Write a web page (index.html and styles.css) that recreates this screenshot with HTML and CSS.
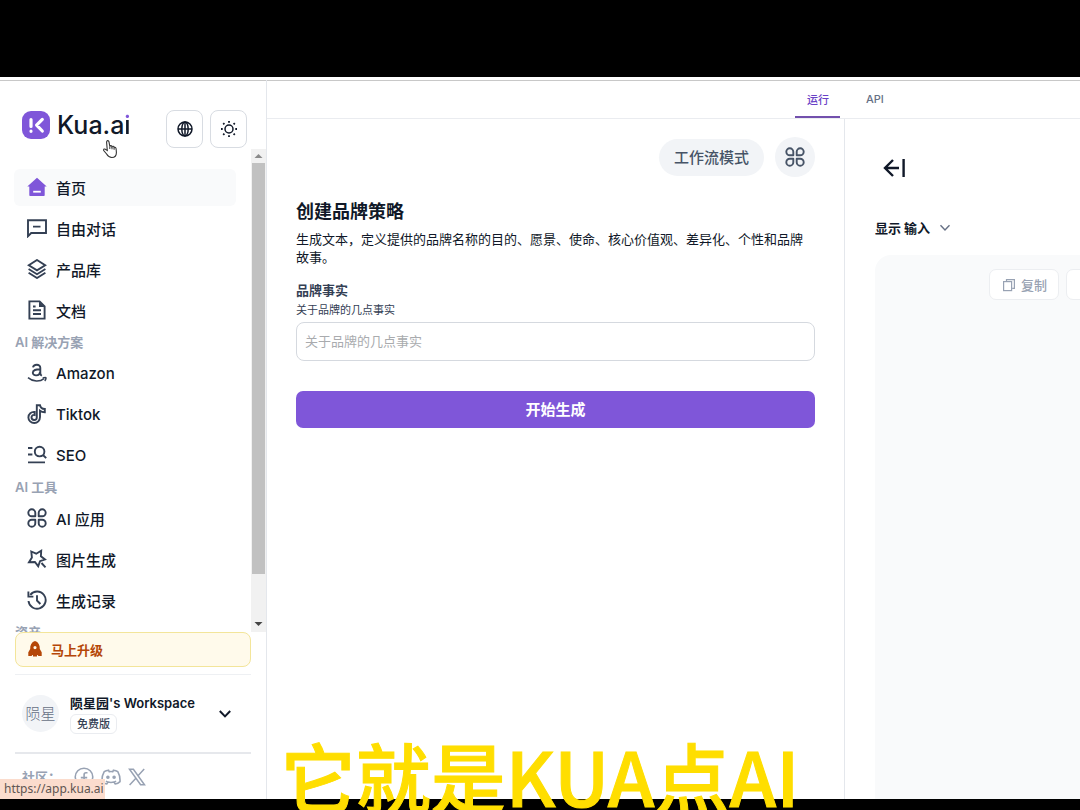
FILE: index.html
```html
<!DOCTYPE html>
<html lang="zh-CN">
<head>
<meta charset="utf-8">
<title>Kua.ai</title>
<link rel="stylesheet" href="styles.css">
</head>
<body>
<svg class="defs" aria-hidden="true">
  <symbol id="clover" viewBox="0 0 20 20"><g fill="none" stroke="currentColor" stroke-width="1.9" stroke-linejoin="round"><path d="M8.3 8.3H4.8A3.5 3.5 0 1 1 8.3 4.8Z"/><path d="M11.7 8.3V4.8A3.5 3.5 0 1 1 15.2 8.3Z"/><path d="M8.3 11.7V15.2A3.5 3.5 0 1 1 4.8 11.7Z"/><path d="M11.7 11.7H15.2A3.5 3.5 0 1 1 11.7 15.2Z"/></g></symbol>
  <symbol id="copy" viewBox="0 0 14 14"><g fill="none" stroke="currentColor" stroke-width="1.2"><path d="M4.5 3.5V1.6H12.4V10.4H10.2"/><rect x="1.6" y="3.6" width="8" height="9"/></g></symbol>
</svg>
<div class="app">
  <aside class="sidebar">
    <header class="brand">
      <a class="logo" href="#">
        <svg width="28" height="28" viewBox="0 0 28 28"><rect width="28" height="28" rx="9" fill="#7f56d9"/><g fill="none" stroke="#fff" stroke-width="3.2" stroke-linecap="round" stroke-linejoin="round"><path d="M9 8.5V15.5M9 20.2V20.3M20.3 8.4L14.6 14.1L20.3 20"/></g></svg>
        <span>Kua.a<span class="logo-i">i</span></span>
      </a>
      <button class="square" aria-label="语言"><svg width="16" height="16" viewBox="0 0 16 16" fill="none" stroke="currentColor" stroke-width="1.5"><circle cx="8" cy="8" r="7"/><ellipse cx="8" cy="8" rx="3.2" ry="7"/><path d="M1 8H15M8 1V15"/></svg></button>
      <button class="square" aria-label="主题"><svg width="18" height="18" viewBox="0 0 18 18" fill="none" stroke="currentColor" stroke-width="1.5"><circle cx="9" cy="9" r="4"/><path stroke-width="1.8" d="M9 1V2.7M9 15.3V17M1 9H2.7M15.3 9H17M3.2 3.2L4.4 4.4M13.6 13.6L14.8 14.8M14.8 3.2L13.6 4.4M4.4 13.6L3.2 14.8"/></svg></button>
      <svg class="cursor" width="16" height="20" viewBox="0 0 16 20"><path d="M5.3 11.5L4.6 3.2C4.5 1.2 6.7 1.1 7 2.8L7.8 7.5C8.2 6.2 9.7 6.3 10 7.8C10.6 6.9 12 7.2 12.1 8.5C12.9 7.9 14 8.5 14.1 9.8L14.4 13.5C14.4 16.7 12.5 18.5 9.8 18.5C6.7 18.5 5.8 17 4.6 15L1.7 11.5C1.1 10 2.8 9.5 3.8 10.5Z" fill="#fff" stroke="#333" stroke-width="1.1"/><path d="M7.8 7.5V10M10 8V10.3M12.1 8.7V10.8" stroke="#333"/></svg>
    </header>
    <div class="scroller">
      <nav class="nav">
        <a class="item active" href="#"><svg class="ico" viewBox="0 0 20 20"><path fill="#7f56d9" d="M10 .8L19.7 9.6H17.7V18.2Q17.7 19 16.9 19H3.1Q2.3 19 2.3 18.2V9.6H.3Z"/><path d="M6.2 14.7H13.8" stroke="#fff" stroke-width="1.8"/></svg>首页</a>
        <a class="item" href="#"><svg class="ico line" viewBox="0 0 20 20"><path d="M1 18.2V2.2H19V15H4.2ZM6 8.6H13.5"/></svg>自由对话</a>
        <a class="item" href="#"><svg class="ico line" viewBox="0 0 20 20"><path d="M10 1L18.2 6.2L10 11.4L1.8 6.2ZM1.6 10L10 15.2L18.4 10M1.6 13.8L10 19L18.4 13.8"/></svg>产品库</a>
        <a class="item" href="#"><svg class="ico line" viewBox="0 0 20 20"><path d="M2.4 1.4H12.6L17.6 6.4V18.6H2.4ZM6 6.5H8.6M6 10.3H14M6 14H14"/><path d="M12 1.4L17.6 7H12Z" fill="currentColor" stroke="none"/></svg>文档</a>
        <h2 class="group">AI 解决方案</h2>
        <a class="item" href="#"><svg class="ico line" viewBox="0 0 20 20"><path d="M6 4.4C6.5 1.2 13.3.4 13.3 4.8V10.2C13.3 11.6 13.8 12.2 14.8 12.8M13.3 6.3C9 6.2 5.8 7.1 5.8 9.8C5.8 13.4 12.7 13.5 13.3 8.7"/><path stroke-width="1.5" d="M1 14.6C6 19 13 19 17 15.6M15.7 14.9Q19.4 14.1 19 15.1Q18.9 16.8 17.7 17.9"/></svg>Amazon</a>
        <a class="item" href="#"><svg class="ico line" viewBox="0 0 20 20"><path d="M9.8 13.2V1.2H13C13.4 3.3 15 4.8 17.8 5V8.2C16 8.2 14.3 7.8 13 6.8V13C13 16.5 10.4 19 7.3 19C4 19 1.4 16.5 1.4 13.4C1.4 9.8 4.4 7.6 7.6 7.9V11C5.8 10.6 4.5 11.8 4.5 13.3C4.5 14.9 5.7 16 7.2 16C8.7 16 9.8 14.8 9.8 13.2Z"/></svg>Tiktok</a>
        <a class="item" href="#"><svg class="ico line" viewBox="0 0 20 20"><circle cx="12.6" cy="6.6" r="4.8"/><path d="M16 10L19.2 13.2M1 3H5.4M1 9.5H5.4M1 17.4H18"/></svg>SEO</a>
        <h2 class="group">AI 工具</h2>
        <a class="item" href="#"><svg class="ico"><use href="#clover"/></svg>AI 应用</a>
        <a class="item" href="#"><svg class="ico line" viewBox="0 0 20 20"><path d="M4.3 2.5L9.2 4.7L14.2 1.8L13.9 7.3L18 10.4L13 12.2L11.2 17.2L7.9 13L2 13.3L4.9 8.5ZM14.5 14L18.5 18.4"/></svg>图片生成</a>
        <a class="item" href="#"><svg class="ico line" viewBox="0 0 20 20"><path d="M3.3 4.8A8.6 8.6 0 1 1 1.5 11M1.4 1.6V6.6H6.4M10 5.3V10.5L13.4 14"/></svg>生成记录</a>
        <h2 class="group">资产</h2>
      </nav>
      <div class="scrollbar" aria-hidden="true">
        <svg width="15" height="14" viewBox="0 0 15 14"><path d="M3.5 9L7.5 5L11.5 9Z" fill="#8a8a8a"/></svg>
        <div class="track"><div class="thumb"></div></div>
        <svg width="15" height="17" viewBox="0 0 15 17"><path d="M3.5 7L7.5 11L11.5 7Z" fill="#444"/></svg>
      </div>
    </div>
    <div class="bottom">
      <button class="upgrade"><svg width="14" height="16" viewBox="0 0 14 16"><path fill="#b54708" fill-rule="evenodd" d="M7 0C10.4 1 12 4 11.8 8L13.7 11.2V15H10.4L9.6 14H9V15.6H5V14H4.4L3.6 15H.3V11.2L2.2 8C2 4 3.6 1 7 0ZM7 5A1.6 1.6 0 1 0 7 8.2A1.6 1.6 0 1 0 7 5Z"/></svg>马上升级</button>
      <button class="workspace">
        <span class="avatar">陨星</span>
        <span class="ws-text"><span class="ws-name">陨星园's Workspace</span><span class="badge">免费版</span></span>
        <svg width="14" height="10" viewBox="0 0 14 10"><path d="M1.8 2L7 7.4L12.2 2" fill="none" stroke="#101828" stroke-width="2"/></svg>
      </button>
      <div class="community"><span class="community-label">社区：</span>
        <a href="#" aria-label="Facebook"><svg width="20" height="20" viewBox="0 0 20 20" fill="none" stroke="currentColor" stroke-width="1.6"><circle cx="10" cy="10" r="8.8"/><path d="M13.5 5.8H12Q10.1 5.8 10.1 7.8V18.5M6.8 10.6H13.2"/></svg></a>
        <a href="#" aria-label="Discord"><svg width="20" height="20" viewBox="0 0 20 20" fill="none" stroke="currentColor" stroke-width="1.6"><path d="M7.5 3.2Q5 3.4 3.2 4.7C1.3 8 .8 11.2 1 14.6Q3 16.6 5.8 17L7 15.1Q10 15.9 13 15.1L14.2 17Q17 16.6 19 14.6C19.2 11.2 18.7 8 16.8 4.7Q15 3.4 12.5 3.2L11.8 4.7Q10 4.4 8.2 4.7ZM4.9 14.1L7 15.1M15.1 14.1L13 15.1"/><circle cx="6.9" cy="10.3" r="1" fill="currentColor"/><circle cx="13.1" cy="10.3" r="1" fill="currentColor"/></svg></a>
        <a href="#" aria-label="X"><svg width="18" height="18" viewBox="0 0 18 18" fill="none" stroke="currentColor" stroke-width="1.5"><path d="M1.5 1.2H5.4L16.5 16.8H12.6ZM16.2 1L9.8 8.1M7.9 10.2L1.6 17"/></svg></a>
      </div>
    </div>
    <div class="status">https://app.kua.ai</div>
  </aside>
  <main class="main">
    <div class="tabs" role="tablist">
      <button class="tab selected" role="tab" aria-selected="true">运行</button>
      <button class="tab" role="tab" aria-selected="false">API</button>
    </div>
    <div class="panes">
      <section class="form-pane">
        <div class="modes">
          <button class="pill">工作流模式</button>
          <button class="round" aria-label="应用"><svg width="20" height="20"><use href="#clover"/></svg></button>
        </div>
        <h1 class="title">创建品牌策略</h1>
        <p class="desc">生成文本，定义提供的品牌名称的目的、愿景、使命、核心价值观、差异化、个性和品牌故事。</p>
        <form class="form">
          <label class="label" for="facts">品牌事实</label>
          <span class="hint" id="facts-hint">关于品牌的几点事实</span>
          <input class="input" id="facts" type="text" placeholder="关于品牌的几点事实" aria-describedby="facts-hint">
          <button class="submit" type="button">开始生成</button>
        </form>
      </section>
      <section class="result-pane">
        <button class="collapse" aria-label="收起"><svg width="22" height="22" viewBox="0 0 22 22" fill="none" stroke="#101828" stroke-width="2.4"><path d="M10 3L2 11L10 19M2 11H16M20.6 2V20"/></svg></button>
        <button class="toggle">显示 输入<svg width="12" height="8" viewBox="0 0 12 8"><path d="M1.5 1.3L6 6L10.5 1.3" fill="none" stroke="#667085" stroke-width="1.4"/></svg></button>
        <div class="result">
          <button class="tool"><svg width="14" height="14"><use href="#copy"/></svg>复制</button>
          <button class="tool" aria-label="下载"><svg width="14" height="14" viewBox="0 0 14 14"><path d="M7 1V9M4 6L7 9L10 6M1 12.5H13" fill="none" stroke="currentColor"/></svg></button>
        </div>
      </section>
    </div>
  </main>
</div>
<div class="caption">它就是KUA点AI</div>
</body>
</html>
```
FILE: styles.css
```css
* { box-sizing: border-box; }
body {
  margin: 0;
  height: 100vh;
  padding: 77px 0 11px;
  background: #000;
  color: #101828;
  font-family: Inter, "Noto Sans CJK SC", sans-serif;
  overflow: hidden;
  position: relative;
}
button, input { font: inherit; color: inherit; }
button { cursor: pointer; border: 0; background: none; padding: 0; }
a { color: inherit; text-decoration: none; }
svg { display: block; flex: none; }
.defs { position: absolute; width: 0; height: 0; }

.app {
  display: flex;
  height: 100%;
  background: #fff;
  border-top: 3px solid #fff;
  box-shadow: inset 0 1px #c8c8c8;
}

.sidebar {
  position: relative;
  flex: none;
  width: 267px;
  display: flex;
  flex-direction: column;
  border-right: 1px solid #e4e7ec;
}
.brand {
  position: relative;
  display: flex;
  align-items: center;
  gap: 7px;
  padding: 28px 19px 0 22px;
  height: 69px;
}
.logo {
  display: flex;
  align-items: center;
  gap: 7px;
  margin-right: auto;
  padding-bottom: 8px;
  font-size: 25px;
  line-height: 28px;
  font-weight: 500;
}
.logo-i {
  color: transparent;
  background: linear-gradient(#7f56d9 9px, #101828 9px);
  background-clip: text;
  -webkit-background-clip: text;
}
.square {
  width: 37px;
  height: 38px;
  display: grid;
  place-items: center;
  border: 1px solid #d8dce2;
  border-radius: 8px;
}
.cursor { position: absolute; left: 102px; top: 59px; }

.scroller { flex: 1; min-height: 0; display: flex; }
.nav {
  flex: 1;
  overflow: hidden;
  padding: 20px 15px 0 14px;
}
.item {
  display: flex;
  align-items: center;
  gap: 9px;
  height: 37px;
  padding: 0 0 1px 13px;
  border-radius: 6px;
  font-size: 15px;
  font-weight: 500;
}
.item + .item { margin-top: 4px; }
.active { background: #f9fafb; }
.ico { width: 20px; height: 20px; color: #344054; }
.line { fill: none; stroke: currentColor; stroke-width: 1.9; }
.group {
  margin: 0 0 0 1px;
  font-size: 13px;
  line-height: 26px;
  font-weight: 600;
  color: #98a2b3;
}
.scrollbar {
  width: 15px;
  display: flex;
  flex-direction: column;
  background: #f1f1f1;
}
.track { flex: 1; }
.thumb { height: 91%; margin: 0 1px; background: #c1c1c1; }

.bottom { padding: 0 15px; }
.upgrade {
  width: 100%;
  height: 35px;
  display: flex;
  align-items: center;
  gap: 9px;
  padding: 0 0 1px 12px;
  border: 1px solid #f3e59a;
  border-radius: 8px;
  background: #fffaeb;
  color: #b54708;
  font-size: 13px;
  font-weight: 700;
}
.workspace {
  width: 100%;
  height: 80px;
  margin-top: 7px;
  display: flex;
  align-items: center;
  padding: 0 19px 0 7px;
  border-top: 1px solid #eef0f3;
  border-bottom: 2px solid #e6e8ec;
  text-align: left;
}
.avatar {
  width: 37px;
  height: 37px;
  display: grid;
  place-items: center;
  border-radius: 50%;
  background: #f2f4f7;
  color: #667085;
  font-size: 15px;
  line-height: 20px;
  font-weight: 300;
  white-space: nowrap;
}
.ws-text {
  flex: 1;
  display: flex;
  flex-direction: column;
  align-items: flex-start;
  gap: 1px;
  margin-left: 11px;
}
.ws-name { font-size: 13px; line-height: 20px; font-weight: 600; white-space: nowrap; }
.badge {
  padding: 0 6px;
  border: 1px solid #eaecf0;
  border-radius: 6px;
  font-size: 11px;
  line-height: 18px;
  font-weight: 500;
  color: #344054;
}
.community {
  height: 45px;
  display: flex;
  align-items: center;
  gap: 7px;
  padding-left: 7px;
  color: #98a2b3;
}
.community-label { width: 45px; font-size: 13px; font-weight: 600; white-space: nowrap; }
.status {
  position: absolute;
  left: 0;
  bottom: 0;
  width: 105px;
  padding-left: 4px;
  background: #fbdccd;
  color: #5f5652;
  font: 12px/20px "Noto Sans", sans-serif;
  white-space: nowrap;
}

.main { flex: 1; min-width: 0; display: flex; flex-direction: column; }
.tabs {
  display: flex;
  gap: 12px;
  height: 39px;
  padding-left: 65%;
  border-bottom: 1px solid #eaecf0;
}
.tab {
  width: 45px;
  height: 38px;
  padding-top: 2px;
  border-bottom: 2px solid transparent;
  font-size: 11px;
  font-weight: 500;
  color: #667085;
}
.selected { color: #6941c6; border-color: #7350ad; }
.panes { flex: 1; min-height: 0; display: flex; }
.form-pane {
  flex: 0 0 71.1%;
  padding: 18px 29px 0;
  border-right: 1px solid #e4e7ec;
}
.modes { display: flex; justify-content: flex-end; align-items: center; gap: 11px; color: #475467; }
.pill {
  height: 37px;
  padding: 0 15px 2px;
  border-radius: 19px;
  background: #f2f4f7;
  font-size: 15px;
  font-weight: 500;
}
.round {
  width: 40px;
  height: 40px;
  display: grid;
  place-items: center;
  border-radius: 50%;
  background: #f2f4f7;
}
.title { margin: 21px 0 4px; font-size: 18px; line-height: 28px; font-weight: 700; }
.desc { margin: 0; font-size: 13px; line-height: 18px; }
.form { display: flex; flex-direction: column; margin-top: 14px; }
.label { font-size: 13px; line-height: 20px; font-weight: 600; color: #344054; }
.hint { margin: 1px 0 3px; font-size: 11px; line-height: 18px; color: #344054; }
.input {
  width: 100%;
  height: 39px;
  padding: 0 8px 2px;
  border: 1px solid #d5d9df;
  border-radius: 8px;
  background: #fff;
  font-size: 13px;
}
.input::placeholder { color: #a9abae; }
.submit {
  height: 37px;
  margin-top: 30px;
  padding-bottom: 2px;
  border-radius: 7px;
  background: #7f56d9;
  color: #fff;
  font-size: 15px;
  font-weight: 700;
}

.result-pane {
  flex: 1;
  min-width: 0;
  display: flex;
  flex-direction: column;
  align-items: flex-start;
  padding: 38px 0 0 30px;
  overflow: hidden;
}
.collapse { margin-left: 8px; }
.toggle {
  display: flex;
  align-items: center;
  gap: 9px;
  margin-top: 39px;
  font-size: 13px;
  line-height: 20px;
  font-weight: 700;
}
.result {
  flex: 1;
  align-self: stretch;
  display: flex;
  justify-content: flex-end;
  align-items: flex-start;
  gap: 7px;
  margin: 17px -70px 0 0;
  padding: 14px;
  border-radius: 16px 16px 0 0;
  background: #f9fafb;
}
.tool {
  width: 70px;
  height: 31px;
  display: flex;
  align-items: center;
  gap: 5px;
  padding-left: 12px;
  border: 1px solid #eceef1;
  border-radius: 7px;
  background: #fff;
  color: #98a2b3;
  font-size: 13px;
  font-weight: 500;
}

.caption {
  position: absolute;
  left: 0;
  right: 0;
  bottom: -10px;
  text-align: center;
  font: 500 75px/90px "Noto Sans CJK SC", sans-serif;
  -webkit-text-stroke: 1px #ffde00;
  color: #ffde00;
  pointer-events: none;
}
```
